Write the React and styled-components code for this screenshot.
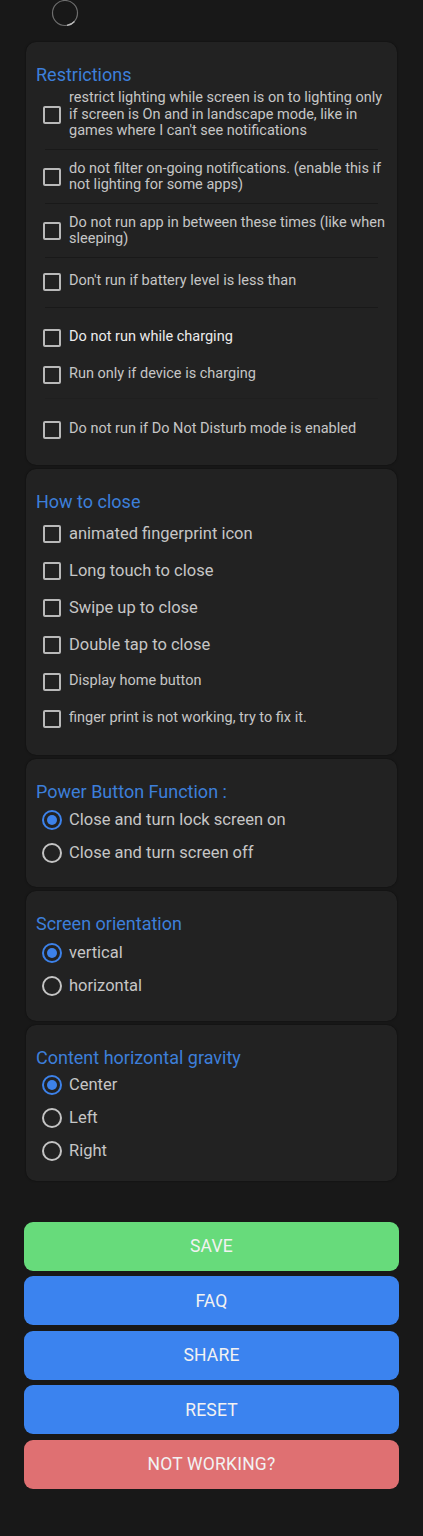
import styled, { createGlobalStyle } from "styled-components";

const GlobalStyle = createGlobalStyle`
  html, body {
    margin: 0;
    padding: 0;
    background: #181818;
  }
  body {
    font-family: Roboto, "Noto Sans", Arial, sans-serif;
  }
`;

const restrictions = [
  { text: "restrict lighting while screen is on to lighting only if screen is On and in landscape mode, like in games where I can't see notifications", pad: "5px 0 9px", divider: true },
  { text: "do not filter on-going notifications. (enable this if not lighting for some apps)", pad: "11px 0 9px", divider: true },
  { text: "Do not run app in between these times (like when sleeping)", pad: "11px 0 9px", divider: true },
  { text: "Don't run if battery level is less than", pad: "15px 0 16px", divider: true },
  { text: "Do not run while charging", pad: "21px 0 0", bright: true },
  { text: "Run only if device is charging", pad: "19px 0 14px", divider: true, faint: true },
  { text: "Do not run if Do Not Disturb mode is enabled", pad: "22px 0 0" },
];

const closeOptions = [
  { text: "animated fingerprint icon", size: 16.5 },
  { text: "Long touch to close", size: 16.5 },
  { text: "Swipe up to close", size: 16.5 },
  { text: "Double tap to close", size: 16.5 },
  { text: "Display home button", size: 14.5 },
  { text: "finger print is not working, try to fix it.", size: 14.5 },
];

const radioGroups = [
  { title: "Power Button Function :", options: ["Close and turn lock screen on", "Close and turn screen off"], top: 8, bottom: 24 },
  { title: "Screen orientation", options: ["vertical", "horizontal"], top: 9, bottom: 25 },
  { title: "Content horizontal gravity", options: ["Center", "Left", "Right"], top: 7, bottom: 20 },
];

const buttons = [
  { label: "SAVE", color: "#67db7b" },
  { label: "FAQ", color: "#3b83ef" },
  { label: "SHARE", color: "#3b83ef" },
  { label: "RESET", color: "#3b83ef" },
  { label: "NOT WORKING?", color: "#df7072" },
];

const Spinner = () => (
  <svg width="28" height="28" viewBox="0 0 28 28">
    <circle cx="14" cy="14" r="12.5" fill="none" stroke="#6e6e6e" strokeWidth="1.2" />
    <path d="M 23.5 22.5 A 12.5 12.5 0 0 1 16 26.4" fill="none" stroke="#bdbdbd" strokeWidth="1.3" />
  </svg>
);

const App = () => {
  return (
    <Page>
      <GlobalStyle />
      <TopBar>
        <Spinner />
      </TopBar>

      <Cards>
        <Card $bottom={26}>
          <Title>Restrictions</Title>
          {restrictions.map((r) => (
            <div key={r.text}>
              <CheckRow $pad={r.pad}>
                <Box />
                <Label $size={14.5} $bright={r.bright}>{r.text}</Label>
              </CheckRow>
              {r.divider && <Divider $faint={r.faint} />}
            </div>
          ))}
        </Card>

        <Card $bottom={27}>
          <Title>How to close</Title>
          <OptionList $top={13} $gap={19}>
            {closeOptions.map((o) => (
              <CheckRow key={o.text}>
                <Box />
                <Label $size={o.size}>{o.text}</Label>
              </CheckRow>
            ))}
          </OptionList>
        </Card>

        {radioGroups.map((g) => (
          <Card key={g.title} $bottom={g.bottom}>
            <Title>{g.title}</Title>
            <OptionList $top={g.top} $gap={13}>
              {g.options.map((opt, i) => (
                <CheckRow key={opt}>
                  <Radio $checked={i === 0} />
                  <Label $size={16.5}>{opt}</Label>
                </CheckRow>
              ))}
            </OptionList>
          </Card>
        ))}
      </Cards>

      <Buttons>
        {buttons.map((b) => (
          <ActionButton key={b.label} $color={b.color}>
            {b.label}
          </ActionButton>
        ))}
      </Buttons>
    </Page>
  );
};

export default App;

const Page = styled.div`
  width: 423px;
  min-height: 1536px;
  background: #181818;
`;

const TopBar = styled.div`
  height: 42px;
  padding-left: 51px;
  margin-top: -1px;
  box-sizing: border-box;
`;

const Cards = styled.div`
  display: flex;
  flex-direction: column;
  gap: 4px;
  padding: 1px 26px 0;
`;

const Card = styled.section`
  background: #222222;
  border-radius: 10px;
  box-shadow: 0 0 2px rgba(0, 0, 0, 0.6);
  padding: 23px 10px ${(p) => p.$bottom}px 10px;
`;

const Title = styled.h2`
  margin: 0;
  font-size: 18px;
  line-height: 20px;
  font-weight: 400;
  color: #3d7fda;
`;

const OptionList = styled.div`
  display: flex;
  flex-direction: column;
  gap: ${(p) => p.$gap}px;
  padding-top: ${(p) => p.$top}px;
`;

const CheckRow = styled.div`
  display: flex;
  align-items: center;
  gap: 8px;
  padding: ${(p) => p.$pad || "0"};
  padding-left: 7px;
`;

const Box = styled.span`
  flex: none;
  width: 18px;
  height: 18px;
  box-sizing: border-box;
  border: 2px solid #b9b9b9;
  border-radius: 2px;
`;

const Radio = styled.span`
  flex: none;
  width: 20px;
  height: 20px;
  margin-left: -1px;
  margin-right: -1px;
  box-sizing: border-box;
  border-radius: 50%;
  border: 2px solid ${(p) => (p.$checked ? "#3d82ea" : "#c4c4c4")};
  display: flex;
  align-items: center;
  justify-content: center;

  &::after {
    content: "";
    width: 10px;
    height: 10px;
    border-radius: 50%;
    background: ${(p) => (p.$checked ? "#3d82ea" : "transparent")};
  }
`;

const Label = styled.span`
  font-size: ${(p) => p.$size}px;
  line-height: ${(p) => (p.$size < 15 ? "16.5px" : "18px")};
  color: ${(p) => (p.$bright ? "#ececec" : "#c6c6c6")};
`;

const Divider = styled.div`
  height: 1px;
  margin: 0 9px;
  background: ${(p) => (p.$faint ? "#1f1f1f" : "#191919")};
`;

const Buttons = styled.div`
  display: flex;
  flex-direction: column;
  gap: 5.5px;
  padding: 41px 24px 0;
`;

const ActionButton = styled.button`
  height: 49px;
  border: none;
  border-radius: 9px;
  background: ${(p) => p.$color};
  color: #f2f2f2;
  font-family: Roboto, "Noto Sans", Arial, sans-serif;
  font-size: 17.5px;
  letter-spacing: 0.2px;
`;
